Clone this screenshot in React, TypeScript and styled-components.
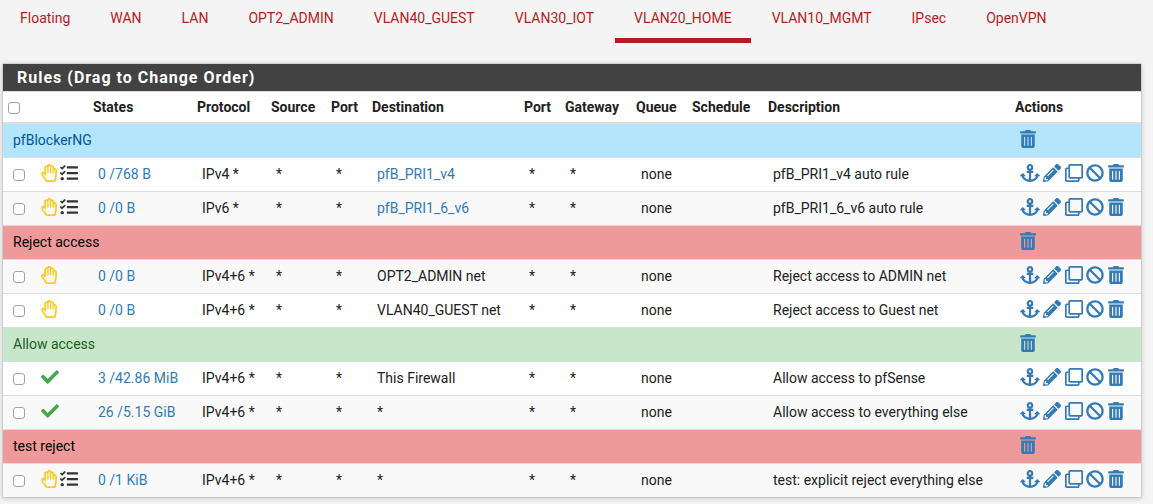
import React from 'react';
import styled, { createGlobalStyle, css } from 'styled-components';
import {
  FaAnchor, FaPencilAlt, FaRegClone, FaBan, FaTrashAlt, FaRegHandPaper, FaTasks, FaCheck,
} from 'react-icons/fa';

const GlobalStyle = createGlobalStyle`
  * { box-sizing: border-box; }
  body {
    margin: 0;
    background: #f4f4f4;
    color: #212121;
    font: 14px/20px Roboto, sans-serif;
  }
`;

const Tabs = styled.nav`
  display: flex;
  gap: 2px;
  height: 43px;
  margin-bottom: 21px;
  padding-left: 1px;
`;

const Tab = styled.a<{ $active?: boolean }>`
  padding: 8px 19px 0;
  border-bottom: 5px solid ${p => (p.$active ? '#b71c1c' : 'transparent')};
  color: #b71c1c;
  text-decoration: none;
  white-space: nowrap;
`;

const Panel = styled.section`
  margin: 0 12px 16px 3px;
  background: #fff;
  box-shadow: 0 0 0 1px rgba(0, 0, 0, 0.08), 0 1px 6px rgba(0, 0, 0, 0.2);
`;

const PanelTitle = styled.h2`
  margin: 0;
  padding: 4px 14px 3px;
  background: #424242;
  color: #fff;
  font-size: 16px;
  line-height: 20px;
  font-weight: 700;
  letter-spacing: 1px;
`;

const Table = styled.table`
  width: 100%;
  table-layout: fixed;
  border-collapse: separate;
  border-spacing: 0;
`;

const Column = styled.col<{ $width?: number }>`
  ${p => p.$width && css`width: ${p.$width}px;`}
`;

const HeadCell = styled.th`
  height: 33px;
  padding: 0 5px;
  border-top: 1px solid #ddd;
  border-bottom: 2px solid #ddd;
  text-align: left;
  vertical-align: middle;
  white-space: nowrap;
`;

const Cell = styled.td`
  height: 34px;
  padding: 0 0 2px 10px;
  border-top: 1px solid #ddd;
  vertical-align: middle;
  white-space: nowrap;
`;

const RuleRow = styled.tr<{ $shaded: boolean }>`
  background: ${p => (p.$shaded ? '#f9f9f9' : '#fff')};
`;

const tones = {
  blue: { background: '#b3e5fc', color: '#01579b' },
  red: { background: '#ef9a9a', color: '#000' },
  green: { background: '#c8e6c9', color: '#1b5e20' },
};
type Tone = keyof typeof tones;

const SeparatorRow = styled.tr<{ $tone: Tone; $first: boolean }>`
  background: ${p => tones[p.$tone].background};
  color: ${p => tones[p.$tone].color};
  ${p => p.$first && css`
    & > td { height: 33px; border-top: 0; }
  `}
`;

const Checkbox = styled.input`
  appearance: none;
  display: block;
  width: 12px;
  height: 12px;
  margin: 2px 0 0;
  border: 1px solid #a3a3a3;
  border-radius: 3px;
  background: #fff;
  &:checked { background: #337ab7; }
`;

const Link = styled.a`
  color: #337ab7;
  text-decoration: none;
`;

const iconBox = css<{ $width: number }>`
  vertical-align: -3px;
  svg { display: block; width: ${p => p.$width}px; height: 18px; }
`;

const IconButton = styled.button<{ $width: number }>`
  padding: 0;
  border: 0;
  background: none;
  color: #337ab7;
  cursor: pointer;
  ${iconBox}
`;

const Status = styled.span<{ $color: string; $width: number }>`
  display: inline-block;
  color: ${p => p.$color};
  ${iconBox}
`;

const tabs = ['Floating', 'WAN', 'LAN', 'OPT2_ADMIN', 'VLAN40_GUEST', 'VLAN30_IOT',
  'VLAN20_HOME', 'VLAN10_MGMT', 'IPsec', 'OpenVPN'];

const columns: { label: string; width?: number }[] = [
  { label: 'States', width: 104 },
  { label: 'Protocol', width: 74 },
  { label: 'Source', width: 60 },
  { label: 'Port', width: 41 },
  { label: 'Destination', width: 152 },
  { label: 'Port', width: 41 },
  { label: 'Gateway', width: 71 },
  { label: 'Queue', width: 56 },
  { label: 'Schedule', width: 76 },
  { label: 'Description' },
  { label: 'Actions', width: 131 },
];

type Rule = {
  pass?: boolean; advanced?: boolean; states: string; protocol: string;
  destination: string; alias?: boolean; description: string;
};
type Entry = Rule | { tone: Tone; title: string };

const entries: Entry[] = [
  { tone: 'blue', title: 'pfBlockerNG' },
  { advanced: true, states: '0 /768 B', protocol: 'IPv4 *', destination: 'pfB_PRI1_v4', alias: true, description: 'pfB_PRI1_v4 auto rule' },
  { advanced: true, states: '0 /0 B', protocol: 'IPv6 *', destination: 'pfB_PRI1_6_v6', alias: true, description: 'pfB_PRI1_6_v6 auto rule' },
  { tone: 'red', title: 'Reject access' },
  { states: '0 /0 B', protocol: 'IPv4+6 *', destination: 'OPT2_ADMIN net', description: 'Reject access to ADMIN net' },
  { states: '0 /0 B', protocol: 'IPv4+6 *', destination: 'VLAN40_GUEST net', description: 'Reject access to Guest net' },
  { tone: 'green', title: 'Allow access' },
  { pass: true, states: '3 /42.86 MiB', protocol: 'IPv4+6 *', destination: 'This Firewall', description: 'Allow access to pfSense' },
  { pass: true, states: '26 /5.15 GiB', protocol: 'IPv4+6 *', destination: '*', description: 'Allow access to everything else' },
  { tone: 'red', title: 'test reject' },
  { advanced: true, states: '0 /1 KiB', protocol: 'IPv4+6 *', destination: '*', description: 'test: explicit reject everything else' },
];

const actions = [
  { label: 'Move checked rules here', Icon: FaAnchor, width: 20 },
  { label: 'Edit', Icon: FaPencilAlt, width: 18 },
  { label: 'Copy', Icon: FaRegClone, width: 18 },
  { label: 'Disable', Icon: FaBan, width: 18 },
  { label: 'Delete', Icon: FaTrashAlt, width: 16 },
];

function Separator({ tone, title, first }: { tone: Tone; title: string; first: boolean }) {
  return (
    <SeparatorRow $tone={tone} $first={first}>
      <Cell colSpan={12}>{title}</Cell>
      <Cell>
        <IconButton type="button" $width={16} aria-label={`Delete separator ${title}`}><FaTrashAlt /></IconButton>
      </Cell>
    </SeparatorRow>
  );
}

function RuleLine({ rule, shaded }: { rule: Rule; shaded: boolean }) {
  return (
    <RuleRow $shaded={shaded}>
      <Cell><Checkbox type="checkbox" aria-label={`Select ${rule.description}`} /></Cell>
      <Cell>
        {rule.pass
          ? <Status $color="#43a84a" $width={18}><FaCheck /></Status>
          : <Status $color="#ffca18" $width={16}><FaRegHandPaper /></Status>}
        {rule.advanced && <>{' '}<Status $color="#333" $width={18}><FaTasks /></Status></>}
      </Cell>
      <Cell><Link href="#states">{rule.states}</Link></Cell>
      <Cell>{rule.protocol}</Cell>
      <Cell>*</Cell>
      <Cell>*</Cell>
      <Cell>{rule.alias ? <Link href="#alias">{rule.destination}</Link> : rule.destination}</Cell>
      <Cell>*</Cell>
      <Cell>*</Cell>
      <Cell>none</Cell>
      <Cell />
      <Cell>{rule.description}</Cell>
      <Cell>
        {actions.map(({ label, Icon, width }) => (
          <React.Fragment key={label}>
            <IconButton type="button" $width={width} aria-label={label}><Icon /></IconButton>{' '}
          </React.Fragment>
        ))}
      </Cell>
    </RuleRow>
  );
}

export default function App() {
  return (
    <>
      <GlobalStyle />
      <Tabs>
        {tabs.map(name => (
          <Tab key={name} href={`#${name}`} $active={name === 'VLAN20_HOME'}>{name}</Tab>
        ))}
      </Tabs>
      <Panel>
        <PanelTitle>Rules (Drag to Change Order)</PanelTitle>
        <Table>
          <colgroup>
            <Column $width={28} />
            <Column $width={57} />
            {columns.map((c, i) => <Column key={i} $width={c.width} />)}
          </colgroup>
          <thead>
            <tr>
              <HeadCell><Checkbox type="checkbox" aria-label="Select all rules" /></HeadCell>
              <HeadCell />
              {columns.map((c, i) => <HeadCell key={i}>{c.label}</HeadCell>)}
            </tr>
          </thead>
          <tbody>
            {entries.map((e, i) => ('tone' in e
              ? <Separator key={i} tone={e.tone} title={e.title} first={i === 0} />
              : <RuleLine key={i} rule={e} shaded={i % 2 === 0} />))}
          </tbody>
        </Table>
      </Panel>
    </>
  );
}
